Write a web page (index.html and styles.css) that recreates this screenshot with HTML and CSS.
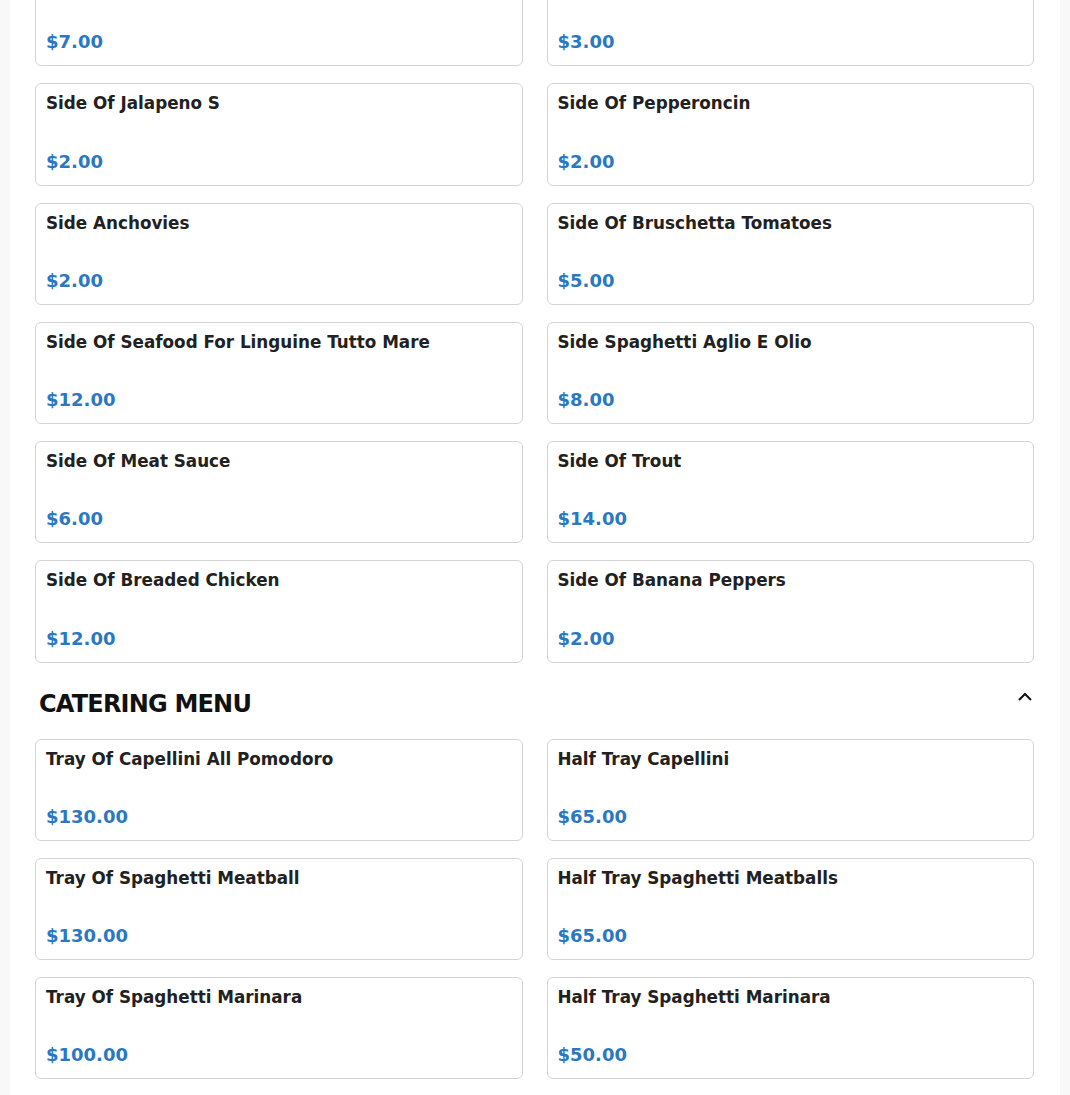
FILE: index.html
```html
<!DOCTYPE html>
<html lang="en">
<head>
    <meta charset="UTF-8">
    <meta name="viewport" content="width=device-width, initial-scale=1.0">
    <title>Menu</title>
    <link rel="stylesheet" href="styles.css">
</head>
<body>
    <div class="page">
        <div class="category">
            <div class="items">
                <div class="item"><div class="item-name">Side Of Meatballs</div><div class="item-price">$7.00</div></div>
                <div class="item"><div class="item-name">Side Of Garlic Bread</div><div class="item-price">$3.00</div></div>
                <div class="item"><div class="item-name">Side Of Jalapeno S</div><div class="item-price">$2.00</div></div>
                <div class="item"><div class="item-name">Side Of Pepperoncin</div><div class="item-price">$2.00</div></div>
                <div class="item"><div class="item-name">Side Anchovies</div><div class="item-price">$2.00</div></div>
                <div class="item"><div class="item-name">Side Of Bruschetta Tomatoes</div><div class="item-price">$5.00</div></div>
                <div class="item"><div class="item-name">Side Of Seafood For Linguine Tutto Mare</div><div class="item-price">$12.00</div></div>
                <div class="item"><div class="item-name">Side Spaghetti Aglio E Olio</div><div class="item-price">$8.00</div></div>
                <div class="item"><div class="item-name">Side Of Meat Sauce</div><div class="item-price">$6.00</div></div>
                <div class="item"><div class="item-name">Side Of Trout</div><div class="item-price">$14.00</div></div>
                <div class="item"><div class="item-name">Side Of Breaded Chicken</div><div class="item-price">$12.00</div></div>
                <div class="item"><div class="item-name">Side Of Banana Peppers</div><div class="item-price">$2.00</div></div>
            </div>
        </div>

        <div class="category">
            <div class="category-header">
                <h2 class="category-title">CATERING MENU</h2>
                <svg class="chevron" width="16" height="10" viewBox="0 0 16 10">
                    <path d="M2 8 L8 2 L14 8" fill="none" stroke="#111" stroke-width="2"/>
                </svg>
            </div>
            <div class="items">
                <div class="item"><div class="item-name">Tray Of Capellini All Pomodoro</div><div class="item-price">$130.00</div></div>
                <div class="item"><div class="item-name">Half Tray Capellini</div><div class="item-price">$65.00</div></div>
                <div class="item"><div class="item-name">Tray Of Spaghetti Meatball</div><div class="item-price">$130.00</div></div>
                <div class="item"><div class="item-name">Half Tray Spaghetti Meatballs</div><div class="item-price">$65.00</div></div>
                <div class="item"><div class="item-name">Tray Of Spaghetti Marinara</div><div class="item-price">$100.00</div></div>
                <div class="item"><div class="item-name">Half Tray Spaghetti Marinara</div><div class="item-price">$50.00</div></div>
            </div>
        </div>
    </div>
</body>
</html>
```

FILE: styles.css
```css
body {
    margin: 0;
    font-family: "DejaVu Sans", sans-serif;
    background-color: #f8f8f8;
    color: #212121;
}
.page {
    background-color: #fff;
    margin: -36px 10px 0 10px;
    padding: 0 26px 20px 25px;
}
.items {
    display: grid;
    grid-template-columns: 1fr 1fr;
    gap: 17px 24px;
}
.item {
    border: 1px solid #d4d4d4;
    border-radius: 6px;
    padding: 10px 10px 10px;
    display: flex;
    flex-direction: column;
}
.item-name {
    font-size: 16.8px;
    line-height: 19.5px;
    font-weight: bold;
    margin-bottom: 33.75px;
}
.item-price {
    font-size: 18px;
    line-height: 27px;
    font-weight: bold;
    color: #2a78c2;
}
.category-header {
    display: flex;
    justify-content: space-between;
    align-items: flex-start;
    padding: 27px 1px 0 4px;
    margin-bottom: 21px;
}
.category-title {
    margin: 0;
    font-size: 24px;
    line-height: 28px;
    letter-spacing: -0.8px;
    font-weight: bold;
    color: #111;
}
.chevron {
    margin-top: 2px;
}
```
